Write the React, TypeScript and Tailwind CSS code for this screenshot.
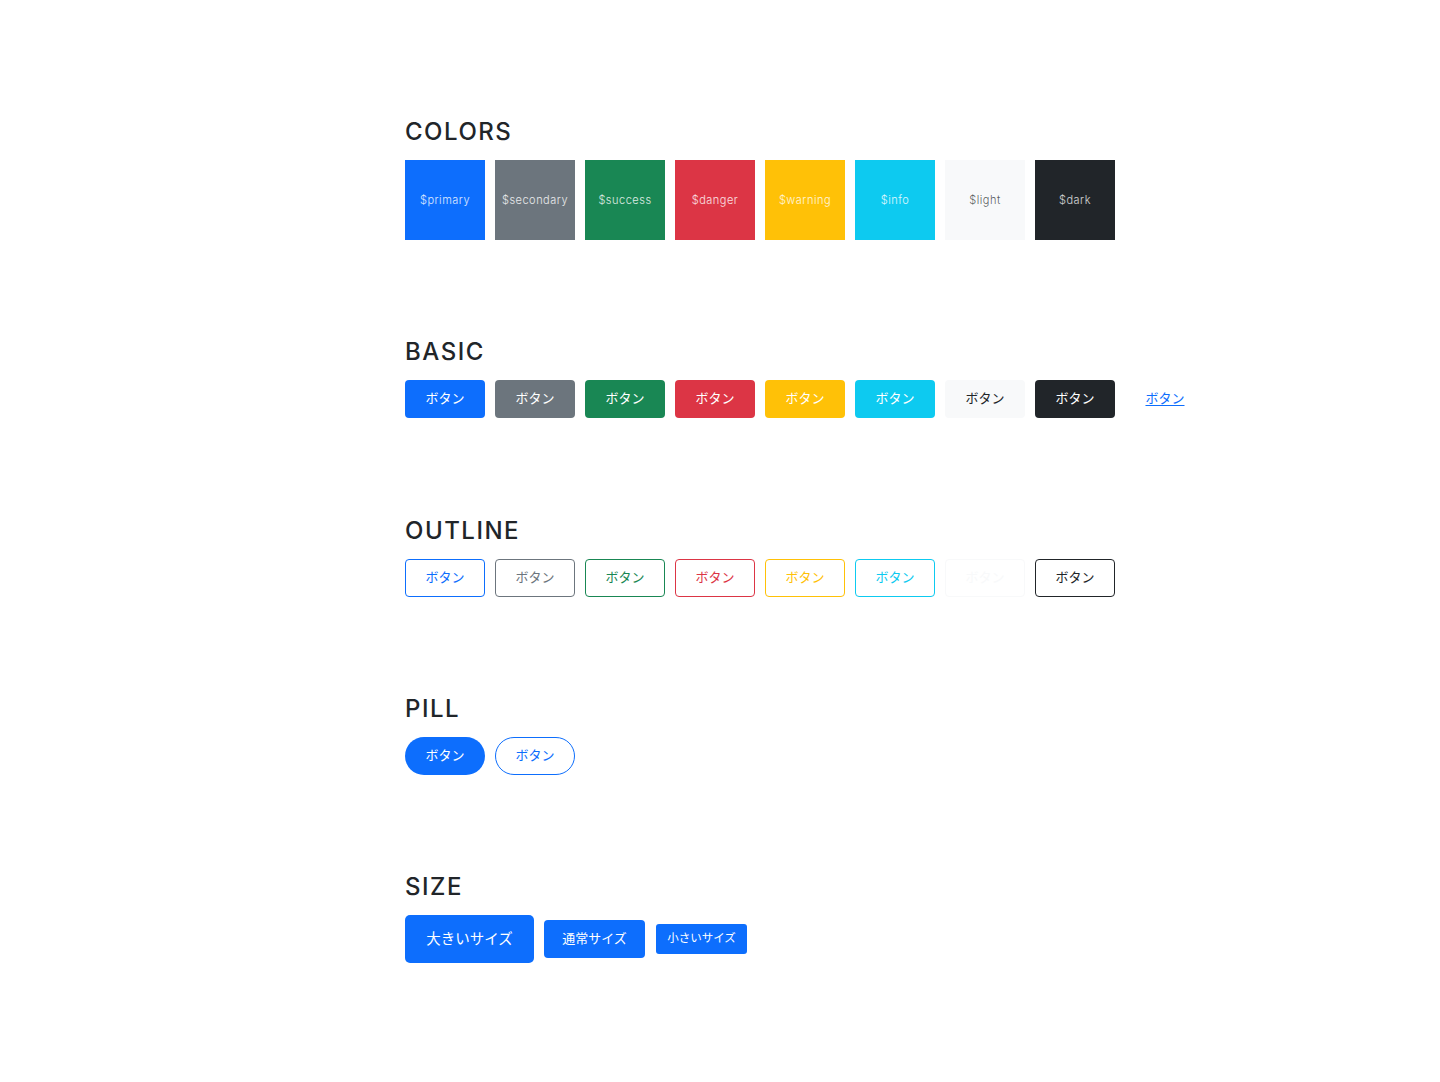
import React from "react";

const FONT = { fontFamily: 'Inter, "Noto Sans CJK JP", "Noto Sans", sans-serif' };

const swatches = [
  { name: "$primary", cls: "bg-[#0d6efd] text-white/85" },
  { name: "$secondary", cls: "bg-[#6c757d] text-white/85" },
  { name: "$success", cls: "bg-[#198754] text-white/85" },
  { name: "$danger", cls: "bg-[#dc3545] text-white/85" },
  { name: "$warning", cls: "bg-[#ffc107] text-white/85" },
  { name: "$info", cls: "bg-[#0dcaf0] text-white/85" },
  { name: "$light", cls: "bg-[#f8f9fa] text-[#212529]/75" },
  { name: "$dark", cls: "bg-[#212529] text-white/80" },
];

const basic = [
  "bg-[#0d6efd] text-white",
  "bg-[#6c757d] text-white",
  "bg-[#198754] text-white",
  "bg-[#dc3545] text-white",
  "bg-[#ffc107] text-white",
  "bg-[#0dcaf0] text-white",
  "bg-[#f8f9fa] text-[#212529]",
  "bg-[#212529] text-white",
];

const outline = [
  "border-[#0d6efd] text-[#0d6efd]",
  "border-[#6c757d] text-[#6c757d]",
  "border-[#198754] text-[#198754]",
  "border-[#dc3545] text-[#dc3545]",
  "border-[#ffc107] text-[#ffc107]",
  "border-[#0dcaf0] text-[#0dcaf0]",
  "border-[#f8f9fa] text-[#f8f9fa]",
  "border-[#212529] text-[#212529]",
];

function Heading({ children }: { children: React.ReactNode }) {
  return (
    <h2 className="text-[24px] leading-[32px] font-medium text-[#212529] mb-3 tracking-[1.5px]">
      {children}
    </h2>
  );
}

export default function App() {
  return (
    <div className="min-h-[1082px] bg-white" style={FONT}>
      <div className="ml-[405px] pt-[116px] flex flex-col gap-[96px]">
        <section>
          <Heading>COLORS</Heading>
          <div className="flex gap-[10px]">
            {swatches.map((s) => (
              <div
                key={s.name}
                className={`w-[80px] h-[80px] flex items-center justify-center text-[11px] font-light tracking-[0.5px] ${s.cls}`}
              >
                {s.name}
              </div>
            ))}
          </div>
        </section>

        <section>
          <Heading>BASIC</Heading>
          <div className="flex gap-[10px]">
            {basic.map((c, i) => (
              <button
                key={i}
                className={`w-[80px] h-[38px] rounded-[4px] flex items-center justify-center text-[13px] ${c}`}
              >
                ボタン
              </button>
            ))}
            <button className="w-[80px] h-[38px] flex items-center justify-center text-[13px] text-[#0d6efd] underline underline-offset-2">
              ボタン
            </button>
          </div>
        </section>

        <section className="pt-px">
          <Heading>OUTLINE</Heading>
          <div className="flex gap-[10px]">
            {outline.map((c, i) => (
              <button
                key={i}
                className={`w-[80px] h-[38px] rounded-[4px] border bg-white flex items-center justify-center text-[13px] ${c}`}
              >
                ボタン
              </button>
            ))}
          </div>
        </section>

        <section>
          <Heading>PILL</Heading>
          <div className="flex gap-[10px]">
            <button className="w-[80px] h-[38px] rounded-full bg-[#0d6efd] text-white flex items-center justify-center text-[13px]">
              ボタン
            </button>
            <button className="w-[80px] h-[38px] rounded-full border border-[#0d6efd] text-[#0d6efd] bg-white flex items-center justify-center text-[13px]">
              ボタン
            </button>
          </div>
        </section>

        <section>
          <Heading>SIZE</Heading>
          <div className="flex items-center gap-[10px]">
            <button className="h-[48px] w-[129px] rounded-[5px] bg-[#0d6efd] text-white flex items-center justify-center text-[14.5px]">
              大きいサイズ
            </button>
            <button className="h-[38px] w-[101px] rounded-[4px] bg-[#0d6efd] text-white flex items-center justify-center text-[13px]">
              通常サイズ
            </button>
            <button className="ml-px h-[30px] w-[91px] rounded-[3px] bg-[#0d6efd] text-white flex items-center justify-center text-[11.5px]">
              小さいサイズ
            </button>
          </div>
        </section>
      </div>
    </div>
  );
}
